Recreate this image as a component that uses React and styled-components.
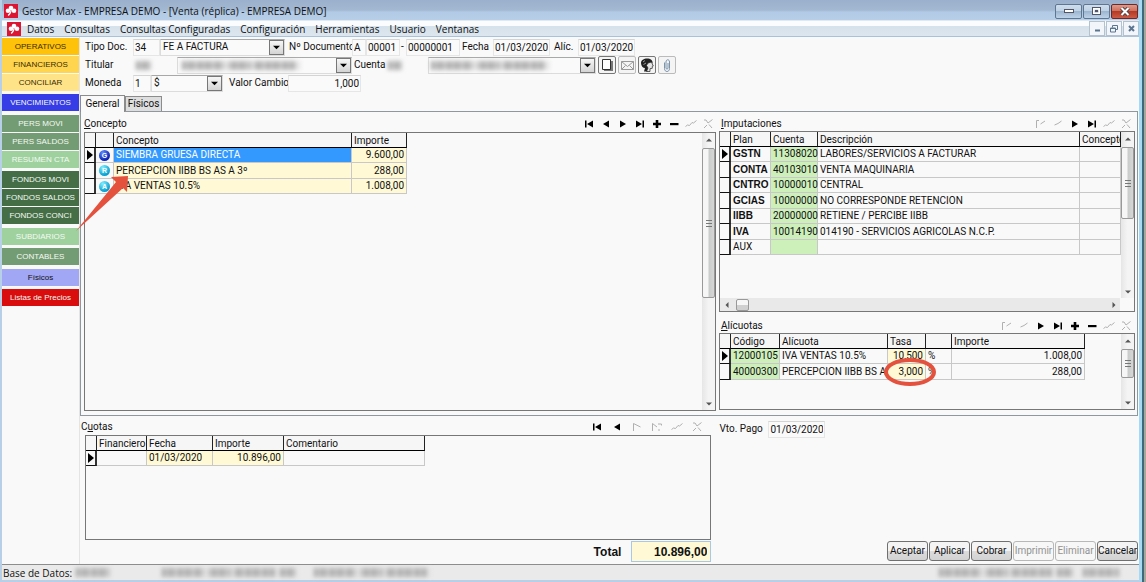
import React, { useState } from "react";
import styled, { createGlobalStyle } from "styled-components";

const GlobalStyle = createGlobalStyle`
  * {
    box-sizing: border-box;
  }
  body {
    margin: 0;
    background: #8f9a9b;
    color: #111;
    font-family: Roboto, "Liberation Sans", sans-serif;
    font-size: 10px;
    line-height: 14px;
  }
  button, input, select {
    font: inherit;
    color: inherit;
    margin: 0;
    padding: 0;
    border-radius: 0;
  }
`;

const Desktop = styled.div`
  min-height: 100vh;
  display: flex;
  padding-right: 2px;
  background: linear-gradient(to left, #a9a79c 2px, #3c6a7c 2px);
`;
const Window = styled.div`
  flex: 1;
  min-width: 0;
  display: flex;
  flex-direction: column;
  background: #f9f9f9;
  border: 2px solid #b7d0e8;
  border-top: 0;
  border-right: 3px solid #a6daf2;
  margin-right: 2px;
`;

/* title bar and menu */
const TitleBar = styled.header`
  height: 20px;
  display: flex;
  align-items: center;
  gap: 4px;
  padding: 2px 1px 0 2px;
  background: linear-gradient(#9ab0cc, #a3b8d1 50%, #b2cae5 60%, #b6cee8);
`;
const Title = styled.h1`
  flex: 1;
  margin: 0;
  font: 400 10px/16px "Open Sans", sans-serif;
`;
const WindowButton = styled.button`
  width: 27px;
  height: 15px;
  display: flex;
  align-items: center;
  justify-content: center;
  border: 1px solid ${(p) => (p.$close ? "#6b2a28" : "#5f7690")};
  border-radius: 2px;
  background: ${(p) =>
    p.$close
      ? "linear-gradient(#dd9a8c, #cf6a57 50%, #b53a26 50%, #cc5a44)"
      : "linear-gradient(#cfdeee, #bdd0e4 50%, #9db6d0 50%, #bcd2e8)"};
`;
const WindowButtons = styled.div`
  display: flex;
  gap: 1px;
`;
const MenuBar = styled.nav`
  height: 17px;
  display: flex;
  align-items: center;
  padding-left: 5px;
  border-top: 1px solid #dfe9f3;
  border-bottom: 1px solid #a9c2da;
  background: linear-gradient(#fbfcfd 5px, #d5e1eb 5px, #dde6ee);
`;
const MenuItems = styled.div`
  display: flex;
  padding-left: 1px;
`;
const MenuItem = styled.button`
  padding: 0 5px;
  border: 0;
  background: none;
  font: 400 10px/14px "Open Sans", sans-serif;
`;
const MdiButtons = styled.div`
  display: flex;
  gap: 1px;
  margin-left: auto;
`;
const MdiButton = styled.button`
  width: 16px;
  height: 15px;
  display: flex;
  align-items: center;
  justify-content: center;
  border: 1px solid #b4c2d0;
  background: #f2f6fa;
`;

/* sidebar */
const Body = styled.div`
  flex: 1;
  display: flex;
`;
const Sidebar = styled.aside`
  width: 78px;
  flex: none;
  display: flex;
  flex-direction: column;
  gap: 1px;
  padding: 1px 0 0;
  border-right: 1px solid #e4e4e4;
`;
const SideButton = styled.button`
  height: 17px;
  margin-top: ${(p) => p.$space || 0}px;
  border: 0;
  background: ${(p) => p.$bg};
  color: ${(p) => p.$color || "#f4faf2"};
  font: 400 8px/16px "Liberation Sans", sans-serif;
  text-align: center;
  white-space: nowrap;
`;

/* header form */
const Main = styled.main`
  flex: 1;
  min-width: 0;
  display: flex;
  flex-direction: column;
`;
const Form = styled.form`
  display: flex;
  flex-direction: column;
  padding: 1px 0 0 5px;
`;
const FormRow = styled.div`
  height: 18px;
  display: flex;
  align-items: center;
`;
const Label = styled.label`
  width: ${(p) => p.$w}px;
  flex: none;
  white-space: nowrap;
  padding-left: ${(p) => p.$pad || 0}px;
`;
const Input = styled.input`
  width: ${(p) => p.$w}px;
  height: 17px;
  padding: 0 1px;
  border: 1px solid #e6e6e6;
  border-top-color: #d4d4d4;
  background: #fafafa;
  text-align: ${(p) => p.$align || "left"};
`;
const SelectBox = styled.div`
  width: ${(p) => p.$w}px;
  height: 17px;
  display: grid;
  grid-template-columns: 1fr 15px;
  align-items: center;
  border: 1px solid #dcdcdc;
  border-top-color: #a8a8a8;
  background: #fafafa;
  > * {
    grid-row: 1;
  }
`;
const SelectField = styled.select`
  grid-column: 1 / 3;
  width: 100%;
  height: 15px;
  padding-left: 2px;
  border: 0;
  appearance: none;
  background: transparent;
`;
const SelectArrow = styled.span`
  grid-column: 2;
  height: 15px;
  display: flex;
  align-items: center;
  justify-content: center;
  border: 1px solid #777;
  background: linear-gradient(#f6f6f6, #d4d4d4);
  pointer-events: none;
`;
const Smudge = styled.span`
  width: ${(p) => p.$w}px;
  height: 9px;
  flex: none;
  margin: 0 ${(p) => p.$end || 0}px 0 ${(p) => p.$start || 0}px;
  background: repeating-linear-gradient(
      90deg,
      transparent 0 41px,
      #e2e2e2 41px 46px,
      transparent 46px 69px,
      #e2e2e2 69px 72px
    ),
    repeating-linear-gradient(90deg, #a6a6a6 0 3px, #cfcfcf 3px 5px, #b4b4b4 5px 12px, #c6c6c6 12px 17px);
  filter: blur(2px);
`;
const MaskedField = styled.span`
  grid-column: 1;
  display: flex;
  pointer-events: none;
`;
const ToolButton = styled.button`
  width: 18px;
  height: 18px;
  margin-left: 2px;
  display: flex;
  align-items: center;
  justify-content: center;
  border: 1px solid ${(p) => (p.$dim ? "#bbb" : "#777")};
  border-radius: 2px;
  background: #f4f4f4;
`;

/* tabs and panels */
const Tabs = styled.div`
  height: 17px;
  display: flex;
  align-items: flex-end;
  margin-top: 2px;
`;
const Tab = styled.button`
  height: ${(p) => (p.$active ? 17 : 15)}px;
  width: ${(p) => (p.$active ? 45 : 37)}px;
  border: 1px solid #8c8c8c;
  border-bottom: 0;
  background: ${(p) => (p.$active ? "#f9f9f9" : "#dedede")};
  margin-bottom: ${(p) => (p.$active ? -1 : 0)}px;
  z-index: 1;
`;
const TabPanel = styled.section`
  flex: 1;
  display: grid;
  grid-template-columns: minmax(0, 635fr) minmax(0, 421fr);
  border: 1px solid #8f979f;
  margin-right: 1px;
`;
const LeftPane = styled.div`
  display: flex;
  flex-direction: column;
  padding: 3px 0 4px 3px;
`;
const RightPane = styled.div`
  display: flex;
  flex-direction: column;
  gap: 6px;
  padding: 4px 2px 5px 3px;
`;
const Block = styled.section`
  display: flex;
  flex-direction: column;
  flex: ${(p) => (p.$grow ? 1 : "none")};
`;
const BlockHead = styled.div`
  height: ${(p) => p.$h || 15}px;
  flex: none;
  display: flex;
  align-items: center;
  justify-content: space-between;
  padding: 0 ${(p) => p.$end || 0}px 0 ${(p) => p.$start || 0}px;
`;
const Caption = styled.h2`
  margin: 0;
  font: inherit;
`;
const NavBar = styled.div`
  display: flex;
`;
const NavButton = styled.button`
  width: ${(p) => p.$w}px;
  height: 13px;
  display: flex;
  align-items: center;
  justify-content: center;
  border: 0;
  background: none;
`;

/* data grids */
const GridFrame = styled.div`
  position: relative;
  flex: ${(p) => (p.$h ? "none" : 1)};
  height: ${(p) => (p.$h ? p.$h + "px" : "auto")};
  margin-left: ${(p) => p.$indent || 0}px;
  display: grid;
  grid-template-columns: minmax(0, 1fr) auto;
  grid-template-rows: 1fr auto;
  border: 1px solid #777;
`;
const Table = styled.table`
  width: ${(p) => (p.$w ? p.$w + "px" : "100%")};
  align-self: start;
  table-layout: fixed;
  border-collapse: separate;
  border-spacing: 0;
  tr {
    height: 15px;
  }
  tbody tr:nth-child(even) {
    height: 16px;
  }
`;
const Th = styled.th`
  height: 15px;
  padding: 0 0 0 2px;
  border-right: 1px solid #222;
  border-bottom: 1px solid #000;
  background: #f6f6f6;
  font-weight: 400;
  line-height: 13px;
  text-align: left;
  white-space: nowrap;
`;
const Td = styled.td`
  position: ${(p) => (p.$marked ? "relative" : "static")};
  padding: 0 2px;
  border-right: 1px solid #c8c8c8;
  border-bottom: 1px solid #c8c8c8;
  background: ${(p) => p.$bg || "transparent"};
  color: ${(p) => p.$color || "inherit"};
  font: ${(p) =>
    p.$bold ? '700 10px/14px "Liberation Sans", sans-serif' : "inherit"};
  text-align: ${(p) => p.$align || "left"};
  white-space: nowrap;
`;
const Marker = styled.td`
  padding: 0 0 0 2px;
  border-right: 2px solid #333;
  border-bottom: 1px solid #111;
  line-height: 0;
`;
const Ball = styled.span`
  width: 11px;
  height: 11px;
  display: block;
  margin: 0 auto;
  border-radius: 50%;
  background: radial-gradient(circle at 35% 25%, ${(p) => p.$light}, ${(p) => p.$dark} 70%);
  color: #fff;
  font: 700 7px/11px "Liberation Sans", sans-serif;
  text-align: center;
`;
const ScrollV = styled.div`
  width: 13px;
  display: flex;
  flex-direction: column;
  align-items: center;
  background: linear-gradient(90deg, #e6e6e6, #f4f4f4 50%);
`;
const ScrollH = styled.div`
  grid-column: 1 / 3;
  height: 13px;
  display: flex;
  align-items: center;
  margin-right: 14px;
  background: #e9e9e9;
`;
const ScrollButton = styled.button`
  width: 13px;
  height: 13px;
  display: flex;
  align-items: center;
  justify-content: center;
  border: 0;
  background: none;
`;
const ThumbV = styled.div`
  width: 13px;
  height: ${(p) => p.$h};
  margin: 2px 0 auto;
  display: flex;
  align-items: center;
  justify-content: center;
  border: 1px solid #999;
  border-radius: 2px;
  background: linear-gradient(90deg, #f6f6f6 45%, #c9cccb 55%, #d6d6d6);
`;
const ThumbH = styled.div`
  width: 13px;
  height: 12px;
  margin: 0 auto 0 3px;
  border: 1px solid #999;
  border-radius: 2px;
  background: linear-gradient(#f6f6f6 45%, #d0d0d0 55%);
`;
const ArrowMark = styled.svg`
  position: absolute;
  left: -10px;
  top: 42px;
  z-index: 2;
  pointer-events: none;
`;
const EllipseMark = styled.svg`
  position: absolute;
  left: -4px;
  top: -6px;
  z-index: 2;
  pointer-events: none;
`;

/* bottom area */
const Bottom = styled.section`
  display: grid;
  grid-template-columns: minmax(0, 632fr) minmax(0, 427fr);
  padding: 2px 1px 2px 0;
`;
const CuotasPane = styled.div`
  display: flex;
  flex-direction: column;
`;
const TotalRow = styled.div`
  display: flex;
  align-items: center;
  justify-content: flex-end;
  gap: 10px;
  margin-top: 1px;
  font: 700 12px/16px "Liberation Sans", sans-serif;
`;
const TotalInput = styled.input`
  width: 80px;
  height: 21px;
  padding-right: 3px;
  border: 1px solid #a9c8e6;
  background: #fffad5;
  text-align: right;
`;
const SidePane = styled.div`
  display: flex;
  flex-direction: column;
  justify-content: space-between;
  padding: 2px 0 1px 8px;
`;
const Actions = styled.div`
  display: flex;
  justify-content: flex-end;
  gap: 1px;
`;
const ActionButton = styled.button`
  width: 41px;
  height: 20px;
  border: 1px solid #707070;
  border-radius: 3px;
  background: linear-gradient(#f4f4f4 50%, #dcdcdc 50%, #d2d2d2);
  &:disabled {
    border-color: #b8b8b8;
    background: #f7f7f7;
    color: #929292;
  }
`;
const StatusBar = styled.footer`
  height: 16px;
  display: flex;
  align-items: center;
  padding: 0 14px 0 1px;
  border-top: 1px solid #8d8d8d;
  background: #eaeaea;
`;
const StatusText = styled.span`
  font: 400 10px/14px "Open Sans", sans-serif;
`;
const Spacer = styled.span`
  flex: 1;
`;

const YELLOW = "#fffad5";
const GREEN = "#cdf0bb";

const menus = ["Datos", "Consultas", "Consultas Configuradas", "Configuración", "Herramientas", "Usuario", "Ventanas"];

const sideItems = [
  { text: "OPERATIVOS", bg: "#ffc20a", color: "#3a2c00" },
  { text: "FINANCIEROS", bg: "#ffd54f", color: "#3a2c00" },
  { text: "CONCILIAR", bg: "#ffe389", color: "#3a2c00" },
  { text: "VENCIMIENTOS", bg: "#363ce6", space: 2 },
  { text: "PERS MOVI", bg: "#749c74", space: 3 },
  { text: "PERS SALDOS", bg: "#749c74" },
  { text: "RESUMEN CTA", bg: "#9fd19f" },
  { text: "FONDOS MOVI", bg: "#456e47", space: 2 },
  { text: "FONDOS SALDOS", bg: "#456e47" },
  { text: "FONDOS CONCI", bg: "#456e47" },
  { text: "SUBDIARIOS", bg: "#9fd19f", space: 3 },
  { text: "CONTABLES", bg: "#749c74", space: 2 },
  { text: "Físicos", bg: "#a1a7f4", color: "#111", space: 3 },
  { text: "Listas de Precios", bg: "#d90d0d", space: 2 },
];

const conceptos = [
  { letter: "G", light: "#5d8cff", dark: "#0a22b4", text: "SIEMBRA GRUESA DIRECTA", importe: "9.600,00" },
  { letter: "R", light: "#7ff0ff", dark: "#0a9fd0", text: "PERCEPCION IIBB BS AS A 3º", importe: "288,00" },
  { letter: "A", light: "#7ff0ff", dark: "#0a9fd0", text: "IVA VENTAS 10.5%", importe: "1.008,00" },
];

const imputaciones = [
  ["GSTN", "11308020", "LABORES/SERVICIOS A FACTURAR"],
  ["CONTA", "40103010", "VENTA MAQUINARIA"],
  ["CNTRO", "10000010", "CENTRAL"],
  ["GCIAS", "10000000", "NO CORRESPONDE RETENCION"],
  ["IIBB", "20000000", "RETIENE / PERCIBE IIBB"],
  ["IVA", "10014190", "014190 - SERVICIOS AGRICOLAS N.C.P."],
  ["AUX", "", ""],
];

const alicuotas = [
  ["12000105", "IVA VENTAS 10.5%", "10,500", "1.008,00"],
  ["40000300", "PERCEPCION IIBB BS A", "3,000", "288,00"],
];

const Logo = () => (
  <svg width="14" height="14" viewBox="0 0 14 14">
    <rect width="14" height="14" fill="#dc1632" />
    <g fill="#fff">
      <circle cx="7" cy="4" r="2.3" />
      <circle cx="4" cy="6.8" r="2.3" />
      <circle cx="10" cy="6.8" r="2.3" />
      <path d="M6.500 6h1.200c0 2-1 4-3 6l-1-1c1.600-1.500 2.500-3 2.800-5z" />
    </g>
  </svg>
);

const navShapes = {
  first: <path d="M2 2.500h1.500v7H2zM10 2.500v7L4 6z" />,
  prev: <path d="M9 2.500v7L3 6z" />,
  next: <path d="M3 2.500v7L9 6z" />,
  last: <path d="M2 2.500v7L8 6zM8.500 2.500h1.500v7H8.500z" />,
  add: <path d="M4.700 2h2.600v2.700H10v2.600H7.300V10H4.700V7.300H2V4.700h2.700z" />,
  remove: <path d="M2 5h8.500v2.200H2z" />,
};
const dimShapes = {
  first: <path d="M1.500 10V2.500H4M5.500 6L10 3" />,
  prev: <path d="M2.500 7L6 5.500L9.500 3" />,
  next: <path d="M2.500 10V2.500L9.500 6" />,
  last: <path d="M1.500 10V2.500L6 6M7 3h3.500v1.500M8 8v2" />,
  post: <path d="M.5 8.500l2-1.500 2 .5L7 4.500l1.500.5 3-2.500" />,
  cancel: <path d="M2 2h2l2 3 4.500-3.500M2 10l3-3M7 6.500L10 10" />,
};

const Nav = ({ items, width = 17 }) => (
  <NavBar>
    {items.map((name) => {
      const dim = name.startsWith("-");
      const key = dim ? name.slice(1) : name;
      return (
        <NavButton key={name} $w={width} type="button" aria-label={key} disabled={dim}>
          <svg
            width="12"
            height="12"
            viewBox="0 0 12 12"
            fill={dim ? "none" : "#000"}
            stroke={dim ? "#b0b0b0" : "none"}
          >
            {dim ? dimShapes[key] : navShapes[key]}
          </svg>
        </NavButton>
      );
    })}
  </NavBar>
);

const Triangle = ({ d, size = 7, fill = "#555" }) => (
  <svg width={size} height={size} viewBox="0 0 8 8" fill={fill}>
    <path d={d} />
  </svg>
);
const UP = "M0 6h8L4 2z";
const DOWN = "M0 2h8L4 6z";

const Select = ({ id, w, label, value, children }) => (
  <SelectBox $w={w}>
    <SelectField id={id} aria-label={label}>
      <option>{value}</option>
    </SelectField>
    {children && <MaskedField>{children}</MaskedField>}
    <SelectArrow>
      <Triangle d={DOWN} fill="#000" />
    </SelectArrow>
  </SelectBox>
);

const VScroll = ({ thumb }) => (
  <ScrollV>
    <ScrollButton type="button" aria-label="Subir">
      <Triangle d={UP} size={6} />
    </ScrollButton>
    <ThumbV $h={thumb}>
      <svg width="6" height="7" stroke="#777">
        <path d="M0 .5h6M0 3.500h6M0 6.500h6" />
      </svg>
    </ThumbV>
    <ScrollButton type="button" aria-label="Bajar">
      <Triangle d={DOWN} size={6} />
    </ScrollButton>
  </ScrollV>
);

const Cols = ({ widths }) => (
  <colgroup>
    {widths.map((w, i) => (
      <col key={i} width={w} />
    ))}
  </colgroup>
);

const RowMarker = ({ current }) => (
  <Marker>
    {current && (
      <svg width="6" height="10" viewBox="0 0 6 10">
        <path d="M0 0v10l6-5z" />
      </svg>
    )}
  </Marker>
);

const ConceptoGrid = () => (
  <GridFrame>
    <Table $w={322}>
      <Cols widths={[11, 18, 238, 55]} />
      <thead>
        <tr>
          <Th />
          <Th />
          <Th>Concepto</Th>
          <Th>Importe</Th>
        </tr>
      </thead>
      <tbody>
        {conceptos.map((item, i) => (
          <tr key={item.letter}>
            <RowMarker current={i === 0} />
            <Td>
              <Ball $light={item.light} $dark={item.dark}>{item.letter}</Ball>
            </Td>
            <Td $bg={i === 0 ? "#3399ff" : YELLOW} $color={i === 0 ? "#fff" : null}>
              {item.text}
            </Td>
            <Td $bg={YELLOW} $align="right">{item.importe}</Td>
          </tr>
        ))}
      </tbody>
    </Table>
    <VScroll thumb="150px" />
    <ArrowMark width="56" height="58" viewBox="0 0 56 58">
      <path d="M1 56L41 7L36 2L53 1L52 17L48 13Z" fill="#e4513d" />
    </ArrowMark>
  </GridFrame>
);

const ImputacionesGrid = () => (
  <GridFrame>
    <Table>
      <Cols widths={[11, 40, 47, undefined, 41]} />
      <thead>
        <tr>
          <Th />
          <Th>Plan</Th>
          <Th>Cuenta</Th>
          <Th>Descripción</Th>
          <Th>Concepto</Th>
        </tr>
      </thead>
      <tbody>
        {imputaciones.map(([plan, cuenta, desc], i) => (
          <tr key={plan}>
            <RowMarker current={i === 0} />
            <Td $bold={plan !== "AUX"}>{plan}</Td>
            <Td $bg={GREEN} $align="right">{cuenta}</Td>
            <Td>{desc}</Td>
            <Td />
          </tr>
        ))}
      </tbody>
    </Table>
    <VScroll thumb="72px" />
    <ScrollH>
      <ScrollButton type="button" aria-label="Izquierda">
        <Triangle d="M6 0v8L2 4z" size={6} />
      </ScrollButton>
      <ThumbH />
      <ScrollButton type="button" aria-label="Derecha">
        <Triangle d="M2 0v8l4-4z" size={6} />
      </ScrollButton>
    </ScrollH>
  </GridFrame>
);

const AlicuotasGrid = () => (
  <GridFrame $h={77}>
    <Table $w={365}>
      <Cols widths={[11, 49, 108, 38, 26, 133]} />
      <thead>
        <tr>
          <Th />
          <Th>Código</Th>
          <Th>Alícuota</Th>
          <Th>Tasa</Th>
          <Th />
          <Th>Importe</Th>
        </tr>
      </thead>
      <tbody>
        {alicuotas.map(([codigo, nombre, tasa, importe], i) => (
          <tr key={codigo}>
            <RowMarker current={i === 0} />
            <Td $bg={GREEN} $align="right">{codigo}</Td>
            <Td>{nombre}</Td>
            <Td $bg={YELLOW} $align="right" $marked={i === 1}>
              {tasa}
              {i === 1 && (
                <EllipseMark width="52" height="28" viewBox="0 0 52 28">
                  <ellipse cx="26" cy="14" rx="24" ry="12" fill="none" stroke="#e4513d" strokeWidth="4" />
                </EllipseMark>
              )}
            </Td>
            <Td>%</Td>
            <Td $align="right">{importe}</Td>
          </tr>
        ))}
      </tbody>
    </Table>
    <VScroll thumb="29px" />
  </GridFrame>
);

const CuotasGrid = () => (
  <GridFrame $h={105} $indent={5}>
    <Table $w={339}>
      <Cols widths={[11, 50, 66, 71, 141]} />
      <thead>
        <tr>
          <Th />
          <Th>Financiero</Th>
          <Th>Fecha</Th>
          <Th>Importe</Th>
          <Th>Comentario</Th>
        </tr>
      </thead>
      <tbody>
        <tr>
          <RowMarker current />
          <Td />
          <Td $bg={YELLOW}>01/03/2020</Td>
          <Td $bg={YELLOW} $align="right">10.896,00</Td>
          <Td />
        </tr>
      </tbody>
    </Table>
  </GridFrame>
);

const HeaderForm = () => (
  <Form>
    <FormRow>
      <Label $w={48} htmlFor="tipo">Tipo Doc.</Label>
      <Input $w={27} id="tipo" defaultValue="34" />
      <Select w={125} label="Tipo de documento" value="FE A FACTURA" />
      <Label $w={67} $pad={4} htmlFor="letra">Nº Documento</Label>
      <Input $w={14} id="letra" defaultValue="A" />
      <Input $w={34} aria-label="Punto de venta" defaultValue="00001" />
      <Label $w={6} $pad={1} htmlFor="numero">-</Label>
      <Input $w={54} id="numero" defaultValue="00000001" />
      <Label $w={33} $pad={2} htmlFor="fecha">Fecha</Label>
      <Input $w={57} id="fecha" defaultValue="01/03/2020" />
      <Label $w={28} $pad={4} htmlFor="alic">Alíc.</Label>
      <Input $w={57} id="alic" defaultValue="01/03/2020" />
    </FormRow>
    <FormRow>
      <Label $w={48} htmlFor="titular">Titular</Label>
      <Smudge $w={15} $start={3} $end={26} />
      <Select id="titular" w={175} label="Titular" value="">
        <Smudge $w={118} $start={4} />
      </Select>
      <Label $w={32} $pad={2} htmlFor="cuenta">Cuenta</Label>
      <Smudge $w={14} $start={4} $end={26} />
      <Select id="cuenta" w={168} label="Cuenta" value="">
        <Smudge $w={118} $start={2} />
      </Select>
      <ToolButton type="button" aria-label="Nuevo">
        <svg width="12" height="14" viewBox="0 0 12 14">
          <path d="M3 3h9v10H3z" fill="#777" />
          <path d="M1.500 1.500h8v10h-8z" fill="#fff" stroke="#333" />
        </svg>
      </ToolButton>
      <ToolButton type="button" aria-label="Correo" $dim>
        <svg width="13" height="9" viewBox="0 0 13 9" fill="none" stroke="#999">
          <path d="M.5.5h12v8H.5zM.5.500l6 5 6-5M.5 8.500l4-4M12.500 8.500l-4-4" />
        </svg>
      </ToolButton>
      <ToolButton type="button" aria-label="Contacto">
        <svg width="14" height="14" viewBox="0 0 14 14">
          <path d="M1 5C1 2 4 .5 7 .5c3.500 0 6 2 5.500 4.500L11 7 8 13.500H4L5 10C3 10 1 8 1 5z" fill="#222" />
          <path d="M8 5l3.500-1 .8 2 1 2-1 .3v2l-2.300.4v2.800H6.500L8 10 6.500 7.500z" fill="#e4e4e4" stroke="#222" strokeWidth=".7" />
          <path d="M3 4l2-1.500M3.500 6.500L6 5" stroke="#999" />
        </svg>
      </ToolButton>
      <ToolButton type="button" aria-label="Adjunto" $dim>
        <svg width="8" height="13" viewBox="0 0 8 13" fill="none" stroke="#7b93ab">
          <path d="M1.500 3.500v6c0 4 5 4 5 0V3c0-3-3.500-3-3.500 0v6c0 1.500 2 1.500 2 0V4" />
        </svg>
      </ToolButton>
    </FormRow>
    <FormRow>
      <Label $w={48} htmlFor="moneda">Moneda</Label>
      <Input $w={18} id="moneda" defaultValue="1" />
      <Select w={72} label="Moneda" value="$" />
      <Label $w={65} $pad={6} htmlFor="cambio">Valor Cambio</Label>
      <Input $w={73} $align="right" id="cambio" defaultValue="1,000" />
    </FormRow>
  </Form>
);

const App = () => {
  const [tab, setTab] = useState("General");
  return (
    <Desktop>
      <GlobalStyle />
      <Window>
        <TitleBar>
          <Logo />
          <Title>Gestor Max - EMPRESA DEMO - [Venta (réplica) - EMPRESA DEMO]</Title>
          <WindowButtons>
            <WindowButton aria-label="Minimizar">
              <svg width="10" height="5"><rect x=".5" y=".5" width="9" height="3" fill="#fff" stroke="#556" /></svg>
            </WindowButton>
            <WindowButton aria-label="Maximizar">
              <svg width="9" height="8"><rect x="1.5" y="1.5" width="6" height="5" fill="none" stroke="#fff" strokeWidth="2" /><rect x=".5" y=".5" width="8" height="7" fill="none" stroke="#556" /><rect x="3.5" y="3.5" width="2" height="1" fill="none" stroke="#556" /></svg>
            </WindowButton>
            <WindowButton aria-label="Cerrar" $close>
              <svg width="10" height="9"><path d="M1.500 1l7 7M8.500 1l-7 7" stroke="#544" strokeWidth="4" /><path d="M1.500 1l7 7M8.500 1l-7 7" stroke="#fff" strokeWidth="2" /></svg>
            </WindowButton>
          </WindowButtons>
        </TitleBar>
        <MenuBar>
          <Logo />
          <MenuItems>
            {menus.map((m) => (
              <MenuItem key={m}>{m}</MenuItem>
            ))}
          </MenuItems>
          <MdiButtons>
            <MdiButton aria-label="Minimizar documento">
              <svg width="7" height="7"><path d="M1 5.500h5" stroke="#5b7590" strokeWidth="2" /></svg>
            </MdiButton>
            <MdiButton aria-label="Restaurar documento">
              <svg width="8" height="8" fill="none" stroke="#5b7590"><path d="M2.500 2.500v-2h5v4h-2M.5 3h5v4h-5zM.5 3.500h5" /></svg>
            </MdiButton>
            <MdiButton aria-label="Cerrar documento">
              <svg width="7" height="7"><path d="M1 1l5 5M6 1L1 6" stroke="#5b7590" strokeWidth="2" /></svg>
            </MdiButton>
          </MdiButtons>
        </MenuBar>
        <Body>
          <Sidebar>
            {sideItems.map((s) => (
              <SideButton key={s.text} $bg={s.bg} $color={s.color} $space={s.space}>
                {s.text}
              </SideButton>
            ))}
          </Sidebar>
          <Main>
            <HeaderForm />
            <Tabs>
              {["General", "Físicos"].map((t) => (
                <Tab key={t} $active={t === tab} onClick={() => setTab(t)}>{t}</Tab>
              ))}
            </Tabs>
            <TabPanel>
              <LeftPane>
                <BlockHead $h={17}>
                  <Caption><u>C</u>oncepto</Caption>
                  <Nav items={["first", "prev", "next", "last", "add", "remove", "-post", "-cancel"]} />
                </BlockHead>
                <ConceptoGrid />
              </LeftPane>
              <RightPane>
                <Block $grow>
                  <BlockHead $start={2} $end={1}>
                    <Caption><u>I</u>mputaciones</Caption>
                    <Nav items={["-first", "-prev", "next", "last", "-post", "-cancel"]} />
                  </BlockHead>
                  <ImputacionesGrid />
                </Block>
                <Block>
                  <BlockHead $start={2} $end={1}>
                    <Caption><u>A</u>lícuotas</Caption>
                    <Nav items={["-first", "-prev", "next", "last", "add", "remove", "-post", "-cancel"]} />
                  </BlockHead>
                  <AlicuotasGrid />
                </Block>
              </RightPane>
            </TabPanel>
            <Bottom>
              <CuotasPane>
                <BlockHead $h={17} $start={1} $end={4}>
                  <Caption>C<u>u</u>otas</Caption>
                  <Nav items={["first", "prev", "-next", "-last", "-post", "-cancel"]} width={20} />
                </BlockHead>
                <CuotasGrid />
                <TotalRow>
                  <label htmlFor="total">Total</label>
                  <TotalInput id="total" defaultValue="10.896,00" />
                </TotalRow>
              </CuotasPane>
              <SidePane>
                <FormRow>
                  <Label $w={49} htmlFor="vto">Vto. Pago</Label>
                  <Input $w={57} id="vto" defaultValue="01/03/2020" />
                </FormRow>
                <Actions>
                  <ActionButton>Aceptar</ActionButton>
                  <ActionButton>Aplicar</ActionButton>
                  <ActionButton>Cobrar</ActionButton>
                  <ActionButton disabled>Imprimir</ActionButton>
                  <ActionButton disabled>Eliminar</ActionButton>
                  <ActionButton>Cancelar</ActionButton>
                </Actions>
              </SidePane>
            </Bottom>
          </Main>
        </Body>
        <StatusBar>
          <StatusText>Base de Datos:</StatusText>
          <Smudge $w={34} $start={4} $end={52} />
          <Smudge $w={134} $end={18} />
          <Smudge $w={116} />
          <Spacer />
          <Smudge $w={134} $end={10} />
          <Smudge $w={36} $end={6} />
        </StatusBar>
      </Window>
    </Desktop>
  );
};

export default App;
